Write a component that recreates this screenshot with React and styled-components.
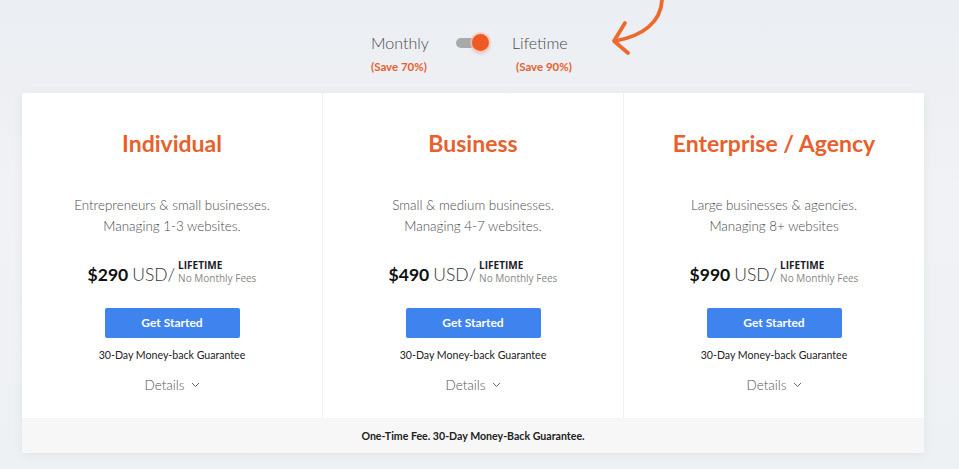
import styled, { createGlobalStyle } from 'styled-components'

const GlobalStyle = createGlobalStyle`
    html, body {
        margin: 0;
        padding: 0;
    }
    body {
        background: linear-gradient(180deg, #ebeef2 0%, #f0f2f5 40%, #eef1f4 100%);
        font-family: 'Lato', 'Open Sans', sans-serif;
        width: 959px;
        height: 469px;
        overflow: hidden;
    }
`;

const Page = styled.div`
    position: relative;
    width: 959px;
    height: 469px;
`;

const Switcher = styled.div`
    display: flex;
    justify-content: center;
    align-items: flex-start;
    gap: 22px;
    padding: 33px 0 0 0;
    height: 61px;
    box-sizing: border-box;
    margin-left: -14px;
`;

const Option = styled.div`
    display: flex;
    flex-direction: column;
    align-items: flex-start;
    width: 62px;
`;

const OptionLabel = styled.span`
    font-size: 16px;
    font-weight: 300;
    color: #4a4a4a;
    line-height: 20px;
`;

const Save = styled.span`
    margin-top: 7px;
    font-size: 11.5px;
    font-weight: 700;
    color: #e8602c;
    line-height: 13px;
    margin-left: ${p => p.$shift || 0}px;
    white-space: nowrap;
`;

const Toggle = styled.div`
    position: relative;
    width: 34px;
    height: 20px;
    margin-left: 1px;

    &::before {
        content: '';
        position: absolute;
        left: 0;
        top: 5px;
        width: 28px;
        height: 10px;
        border-radius: 5px;
        background: #a9a9a9;
    }
    &::after {
        content: '';
        position: absolute;
        left: 16px;
        top: 1px;
        width: 17px;
        height: 17px;
        border-radius: 50%;
        background: #ef5a24;
        box-shadow: 0 0 0 2px rgba(255, 200, 180, 0.7), 0 2px 4px rgba(0, 0, 0, 0.2);
    }
`;

const Arrow = styled.svg`
    position: absolute;
    left: 605px;
    top: 0;
`;

const Table = styled.div`
    margin-left: 22px;
    width: 902px;
    background: #fff;
    box-shadow: 0 2px 10px rgba(0, 0, 0, 0.06);
    margin-top: 32px;
`;

const Columns = styled.div`
    display: grid;
    grid-template-columns: 300px 301px 301px;
`;

const Column = styled.div`
    display: flex;
    flex-direction: column;
    align-items: center;
    padding: 34px 0 24px;
    height: 325px;
    box-sizing: border-box;
    border-left: ${p => (p.$first ? 'none' : '1px solid #f0f0f0')};
`;

const Title = styled.h2`
    margin: 0;
    font-size: 23px;
    font-weight: 700;
    color: #e8602c;
    line-height: 32px;
`;

const Desc = styled.p`
    margin: 36px 0 0;
    font-size: 13.4px;
    font-weight: 300;
    color: #4a4a4a;
    line-height: 21px;
    text-align: center;
`;

const PriceRow = styled.div`
    display: flex;
    align-items: flex-end;
    margin-top: 19px;
    height: 30px;
`;

const Amount = styled.span`
    font-size: 17.5px;
    font-weight: 700;
    color: #111;
    line-height: 22px;
`;

const Currency = styled.span`
    font-size: 17.5px;
    font-weight: 300;
    color: #333;
    line-height: 22px;
    margin-left: 4px;
`;

const PriceNote = styled.div`
    display: flex;
    flex-direction: column;
    margin-left: 3px;
    margin-bottom: 1px;
`;

const NoteTop = styled.span`
    font-family: 'Open Sans', sans-serif;
    font-size: 10px;
    font-weight: 700;
    color: #1a1a2a;
    line-height: 11px;
`;

const NoteBottom = styled.span`
    font-family: 'Open Sans', sans-serif;
    font-size: 10px;
    color: #888;
    line-height: 14px;
`;

const Button = styled.button`
    margin-top: 22px;
    width: 135px;
    height: 31px;
    padding: 0;
    border: none;
    border-radius: 2px;
    background: #3f83ef;
    color: #fff;
    font-family: 'Lato', sans-serif;
    font-size: 12px;
    font-weight: 700;
    cursor: pointer;
`;

const Guarantee = styled.div`
    margin-top: 10px;
    font-size: 10.6px;
    color: #222;
    line-height: 14px;
`;

const Details = styled.div`
    display: flex;
    align-items: center;
    gap: 6px;
    margin-top: 14px;
    font-size: 13.5px;
    font-weight: 300;
    color: #555;
    line-height: 18px;
`;

const Footer = styled.div`
    background: #f7f7f7;
    height: 35px;
    display: flex;
    align-items: center;
    justify-content: center;
    font-size: 10.6px;
    font-weight: 700;
    color: #222;
`;

const plans = [
    { name: 'Individual', lines: ['Entrepreneurs & small businesses.', 'Managing 1-3 websites.'], price: '$290' },
    { name: 'Business', lines: ['Small & medium businesses.', 'Managing 4-7 websites.'], price: '$490' },
    { name: 'Enterprise / Agency', lines: ['Large businesses & agencies.', 'Managing 8+ websites'], price: '$990' },
];

const Chevron = () => (
    <svg width="9" height="6" viewBox="0 0 9 6">
        <path d="M1 1l3.5 3.5L8 1" fill="none" stroke="#666" strokeWidth="1" />
    </svg>
);

const App = () => {
    return (<Page>
        <GlobalStyle />
        <Switcher>
            <Option>
                <OptionLabel>Monthly</OptionLabel>
                <Save>(Save 70%)</Save>
            </Option>
            <Toggle />
            <Option>
                <OptionLabel>Lifetime</OptionLabel>
                <Save $shift={4}>(Save 90%)</Save>
            </Option>
        </Switcher>
        <Arrow width="70" height="60" viewBox="0 0 70 60">
            <path d="M57 0 C56 22 38 36 10 41" fill="none" stroke="#ec6a2e" strokeWidth="3.8" strokeLinecap="round" />
            <path d="M20 23 L9 41 L23 53" fill="none" stroke="#ec6a2e" strokeWidth="3.8" strokeLinecap="round" strokeLinejoin="round" />
        </Arrow>
        <Table>
            <Columns>
                {plans.map((p, i) => (
                    <Column key={p.name} $first={i === 0}>
                        <Title>{p.name}</Title>
                        <Desc>{p.lines[0]}<br />{p.lines[1]}</Desc>
                        <PriceRow>
                            <Amount>{p.price}</Amount>
                            <Currency>USD/</Currency>
                            <PriceNote>
                                <NoteTop>LIFETIME</NoteTop>
                                <NoteBottom>No Monthly Fees</NoteBottom>
                            </PriceNote>
                        </PriceRow>
                        <Button>Get Started</Button>
                        <Guarantee>30-Day Money-back Guarantee</Guarantee>
                        <Details>Details <Chevron /></Details>
                    </Column>
                ))}
            </Columns>
            <Footer>One-Time Fee. 30-Day Money-Back Guarantee.</Footer>
        </Table>
    </Page>
    );
}

export default App
